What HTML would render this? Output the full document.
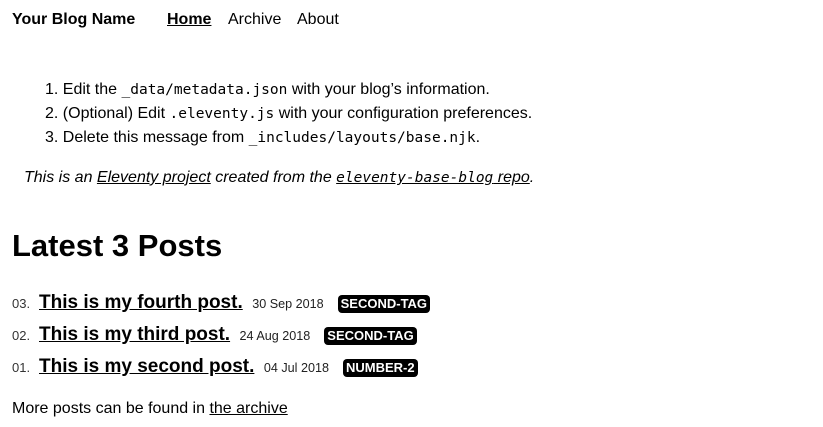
<!DOCTYPE html>
<html><head><meta charset="utf-8"><style>
body{margin:0;width:823px;height:427px;background:#fff;color:#000;font-family:"Liberation Sans",sans-serif;font-size:16px;position:relative;overflow:hidden}
.a{position:absolute;white-space:nowrap;line-height:1}
a{color:#000;text-decoration:underline}
code{font-family:"DejaVu Sans Mono","Liberation Mono",monospace;font-size:14.5px}
.n{display:inline-block;width:27px;font-size:13px;color:#333}
.t{font-size:19px;font-weight:bold}
.d{font-size:12.6px;color:#222;margin-left:5px}
.tag{display:inline-block;margin-left:14px;background:#000;color:#fff;font-size:13px;font-weight:bold;padding:2px 3px;border-radius:4px;text-transform:uppercase;line-height:14px}
</style></head><body>
<div class="a" style="left:12px;top:12px;font-weight:bold">Your Blog Name</div>
<div class="a" style="left:167px;top:12px"><a style="font-weight:bold" href="#">Home</a></div>
<div class="a" style="left:228px;top:12px">Archive</div>
<div class="a" style="left:297px;top:12px">About</div>
<div class="a" style="left:45px;top:82px">1. Edit the <code>_data/metadata.json</code> with your blog’s information.</div>
<div class="a" style="left:45px;top:106px">2. (Optional) Edit <code>.eleventy.js</code> with your configuration preferences.</div>
<div class="a" style="left:45px;top:130px">3. Delete this message from <code>_includes/layouts/base.njk</code>.</div>
<div class="a" style="left:24px;top:170px;font-style:italic">This is an <a href="#">Eleventy project</a> created from the <a href="#"><code>eleventy-base-blog</code> repo</a>.</div>
<div class="a" style="left:12px;top:230px;font-size:31px;font-weight:bold">Latest 3 Posts</div>
<div class="a" style="left:12px;top:293px"><span class="n">03.</span><a class="t" href="#">This is my fourth post.</a> <span class="d">30 Sep 2018</span><span class="tag">second-tag</span></div>
<div class="a" style="left:12px;top:325px"><span class="n">02.</span><a class="t" href="#">This is my third post.</a> <span class="d">24 Aug 2018</span><span class="tag">second-tag</span></div>
<div class="a" style="left:12px;top:357px"><span class="n">01.</span><a class="t" href="#">This is my second post.</a> <span class="d">04 Jul 2018</span><span class="tag">number-2</span></div>
<div class="a" style="left:12px;top:401px">More posts can be found in <a href="#">the archive</a></div>
</body></html>
